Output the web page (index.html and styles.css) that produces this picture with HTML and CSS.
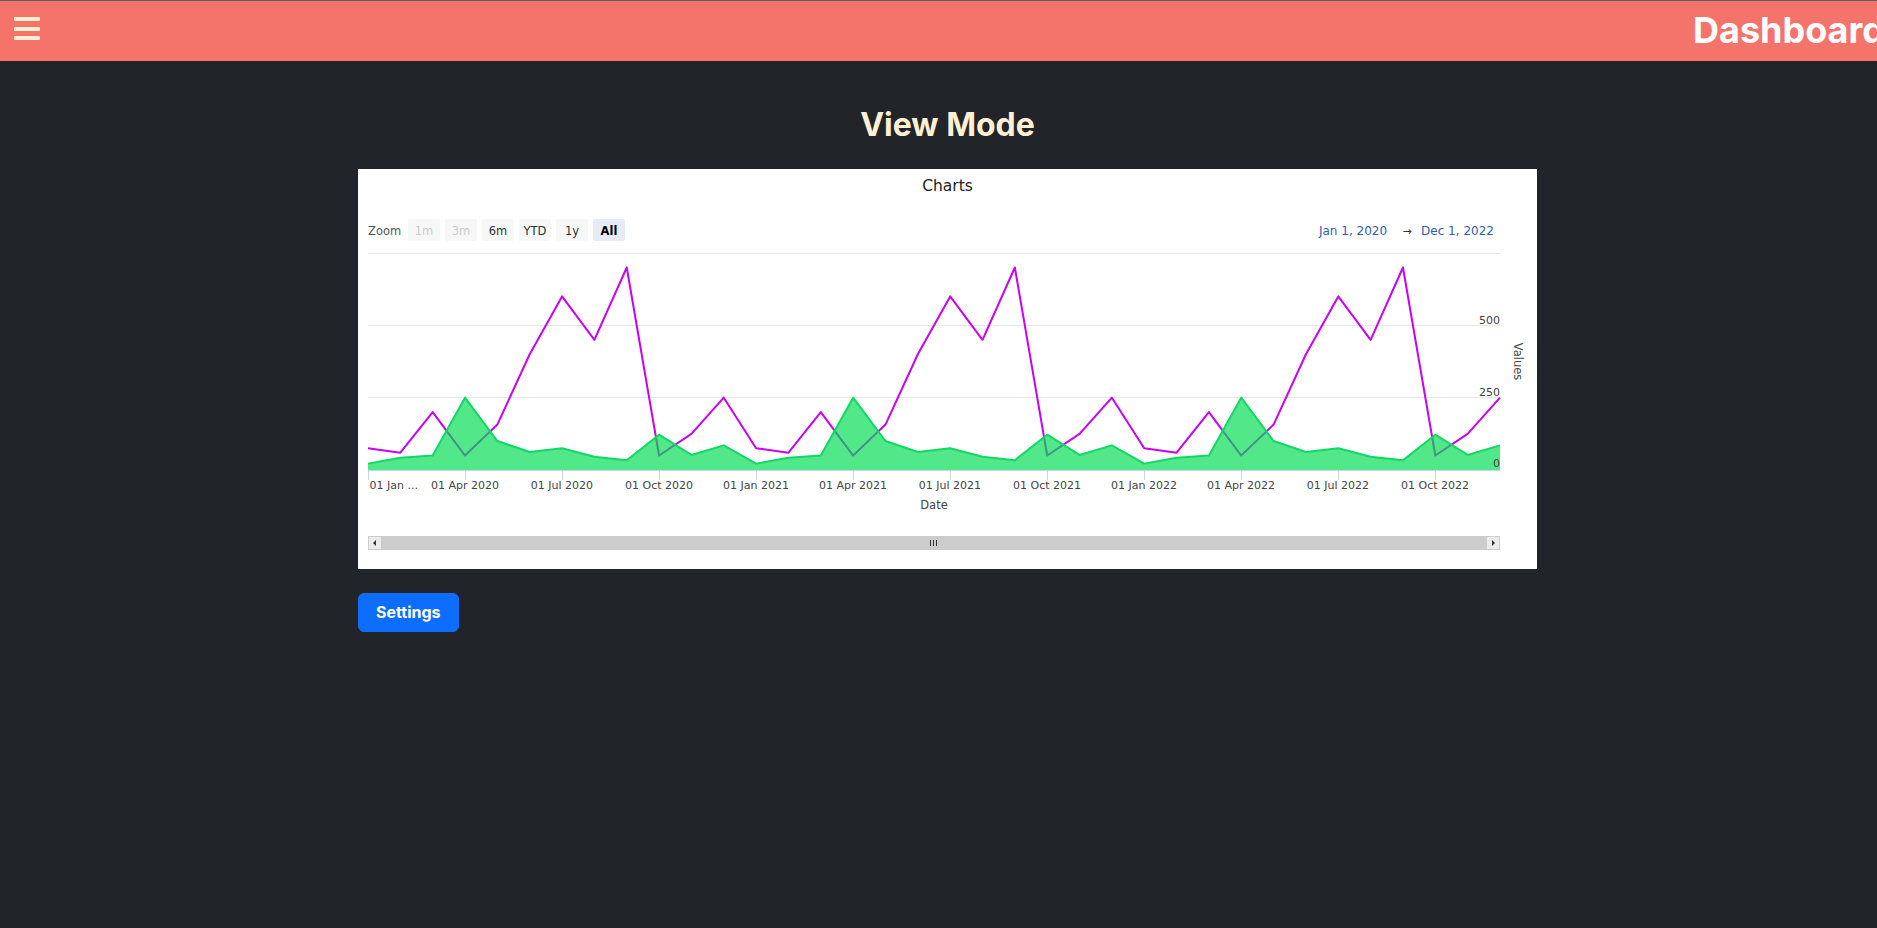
FILE: index.html
```html
<!DOCTYPE html>
<html lang="en">
<head>
<meta charset="utf-8">
<title>Dashboard</title>
<link rel="stylesheet" href="styles.css">
</head>
<body>
<div class="page">
  <header class="topbar">
    <button class="menu-btn" aria-label="Menu">
      <svg width="26" height="24" viewBox="0 0 26 24">
        <rect x="0" y="0" width="26" height="4" rx="1"/>
        <rect x="0" y="10" width="26" height="4" rx="1"/>
        <rect x="0" y="19" width="26" height="4" rx="1"/>
      </svg>
    </button>
    <h1 class="brand">Dashboard</h1>
  </header>

  <main class="content">
    <h2 class="page-title">View Mode</h2>

    <div class="chart-card">
      <svg class="chart" width="1179" height="400" viewBox="0 0 1179 400">
        <text class="c-title" x="589.5" y="21.5">Charts</text>

        <!-- range selector -->
        <text class="rs-label" x="10" y="66">Zoom</text>
        <g class="rs-btn disabled"><rect x="50" y="50" width="32" height="22" rx="2"/><text x="66" y="65.5">1m</text></g>
        <g class="rs-btn disabled"><rect x="87" y="50" width="32" height="22" rx="2"/><text x="103" y="65.5">3m</text></g>
        <g class="rs-btn"><rect x="124" y="50" width="32" height="22" rx="2"/><text x="140" y="65.5">6m</text></g>
        <g class="rs-btn"><rect x="161" y="50" width="32" height="22" rx="2"/><text x="177" y="65.5">YTD</text></g>
        <g class="rs-btn"><rect x="198" y="50" width="32" height="22" rx="2"/><text x="214" y="65.5">1y</text></g>
        <g class="rs-btn selected"><rect x="235" y="50" width="32" height="22" rx="2"/><text x="251" y="65.5">All</text></g>

        <text class="rs-date" x="995" y="65.5">Jan 1, 2020</text>
        <text class="rs-arrow" x="1049" y="65.5">→</text>
        <text class="rs-date" x="1099.5" y="65.5">Dec 1, 2022</text>

        <!-- grid -->
        <g class="grid">
          <line x1="10" y1="84.5" x2="1142" y2="84.5"/>
          <line x1="10" y1="156.5" x2="1142" y2="156.5"/>
          <line x1="10" y1="228.5" x2="1142" y2="228.5"/>
        </g>

        <!-- series -->
        <g transform="translate(10,301) scale(32.342857,-0.289333)">
          <polyline class="s-purple" points="0,75 1,60 2,200 3,50 4,157 5,400 6,600 7,450 8,700 9,50 10,125 11,250 12,75 13,60 14,200 15,50 16,157 17,400 18,600 19,450 20,700 21,50 22,125 23,250 24,75 25,60 26,200 27,50 28,157 29,400 30,600 31,450 32,700 33,50 34,125 35,250"/>
          <polygon class="s-green-area" points="0,0 0,22 1,42 2,50 3,250 4,100 5,62 6,75 7,46 8,34 9,122 10,52 11,85 12,22 13,42 14,50 15,250 16,100 17,62 18,75 19,46 20,34 21,122 22,52 23,85 24,22 25,42 26,50 27,250 28,100 29,62 30,75 31,46 32,34 33,122 34,52 35,85 35,0"/>
          <polyline class="s-green-line" points="0,22 1,42 2,50 3,250 4,100 5,62 6,75 7,46 8,34 9,122 10,52 11,85 12,22 13,42 14,50 15,250 16,100 17,62 18,75 19,46 20,34 21,122 22,52 23,85 24,22 25,42 26,50 27,250 28,100 29,62 30,75 31,46 32,34 33,122 34,52 35,85"/>
        </g>

        <!-- x axis -->
        <line class="axis-line" x1="10" y1="301.5" x2="1142" y2="301.5"/>
        <g class="ticks">
          <line x1="10.5" y1="301" x2="10.5" y2="311"/>
          <line x1="107.5" y1="301" x2="107.5" y2="311"/>
          <line x1="204.5" y1="301" x2="204.5" y2="311"/>
          <line x1="301.5" y1="301" x2="301.5" y2="311"/>
          <line x1="398.5" y1="301" x2="398.5" y2="311"/>
          <line x1="495.5" y1="301" x2="495.5" y2="311"/>
          <line x1="592.5" y1="301" x2="592.5" y2="311"/>
          <line x1="689.5" y1="301" x2="689.5" y2="311"/>
          <line x1="786.5" y1="301" x2="786.5" y2="311"/>
          <line x1="883.5" y1="301" x2="883.5" y2="311"/>
          <line x1="980.5" y1="301" x2="980.5" y2="311"/>
          <line x1="1077.5" y1="301" x2="1077.5" y2="311"/>
        </g>
        <g class="x-labels">
          <text class="first" x="11.5" y="320">01 Jan ...</text>
          <text x="107" y="320">01 Apr 2020</text>
          <text x="204" y="320">01 Jul 2020</text>
          <text x="301" y="320">01 Oct 2020</text>
          <text x="398" y="320">01 Jan 2021</text>
          <text x="495" y="320">01 Apr 2021</text>
          <text x="592" y="320">01 Jul 2021</text>
          <text x="689" y="320">01 Oct 2021</text>
          <text x="786" y="320">01 Jan 2022</text>
          <text x="883" y="320">01 Apr 2022</text>
          <text x="980" y="320">01 Jul 2022</text>
          <text x="1077" y="320">01 Oct 2022</text>
        </g>
        <text class="axis-title" x="576" y="340">Date</text>

        <!-- y axis -->
        <g class="y-labels">
          <text x="1142" y="155">500</text>
          <text x="1142" y="227">250</text>
          <text x="1142" y="298">0</text>
        </g>
        <text class="axis-title" transform="translate(1156,192.5) rotate(90)">Values</text>

        <!-- scrollbar -->
        <g class="scrollbar">
          <rect class="sb-track" x="10.5" y="367.5" width="1131" height="13"/>
          <rect class="sb-thumb" x="24" y="368" width="1104" height="12"/>
          <rect class="sb-btn" x="10.5" y="367.5" width="13" height="13"/>
          <rect class="sb-btn" x="1128.5" y="367.5" width="13" height="13"/>
          <path class="sb-arrow" d="M15 374 L18 371 L18 377 Z"/>
          <path class="sb-arrow" d="M1137 374 L1134 371 L1134 377 Z"/>
          <line class="sb-grip" x1="572.5" y1="371" x2="572.5" y2="377"/>
          <line class="sb-grip" x1="575.5" y1="371" x2="575.5" y2="377"/>
          <line class="sb-grip" x1="578.5" y1="371" x2="578.5" y2="377"/>
        </g>
      </svg>
    </div>

    <button class="btn-settings">Settings</button>
  </main>
</div>
</body>
</html>
```

FILE: styles.css
```css
html,
body {
  margin: 0;
  padding: 0;
  background: #212529;
  overflow: hidden;
}

.page {
  width: 1895px;
  min-height: 928px;
  background: #212529;
}

/* ---------- top bar ---------- */
.topbar {
  box-sizing: border-box;
  height: 61px;
  border-top: 1px solid #5c5f63;
  background: #f4736b;
  display: flex;
  justify-content: space-between;
  align-items: flex-start;
  padding: 0 10px 0 14px;
}

.menu-btn {
  margin-top: 16px;
  width: 26px;
  height: 24px;
  padding: 0;
  border: 0;
  background: none;
  display: block;
}

.menu-btn svg {
  display: block;
  fill: #ffefd5;
}

.brand {
  margin: 11px 0 0 0;
  font-family: Inter, "Liberation Sans", sans-serif;
  font-weight: 700;
  font-size: 36px;
  line-height: 36px;
  color: #ffffff;
  white-space: nowrap;
}

/* ---------- content ---------- */
.content {
  display: flex;
  flex-direction: column;
  align-items: center;
}

.page-title {
  margin: 45px 0 25px;
  font-family: Inter, "Liberation Sans", sans-serif;
  font-weight: 700;
  font-size: 32px;
  line-height: 38px;
  color: #ffefd5;
  text-align: center;
}

.chart-card {
  width: 1179px;
  height: 400px;
  background: #ffffff;
}

.chart {
  display: block;
}

.chart text {
  font-family: "DejaVu Sans", "Noto Sans", sans-serif;
}

.c-title {
  font-size: 15.5px;
  fill: #222222;
  text-anchor: middle;
}

.rs-label {
  font-size: 11.5px;
  fill: #555555;
}

.rs-btn rect {
  fill: #f7f7f7;
}

.rs-btn text {
  font-size: 11.5px;
  fill: #333333;
  text-anchor: middle;
}

.rs-btn.disabled text {
  fill: #cccccc;
}

.rs-btn.selected rect {
  fill: #e6ebf5;
}

.rs-btn.selected text {
  fill: #000000;
  font-weight: bold;
}

.rs-date {
  font-size: 12px;
  fill: #335cad;
  text-anchor: middle;
}

.rs-arrow {
  font-size: 11px;
  fill: #333333;
  text-anchor: middle;
}

.grid line {
  stroke: #e6e6e6;
  stroke-width: 1;
}

.axis-line,
.ticks line {
  stroke: #ccd6eb;
  stroke-width: 1;
}

.s-purple {
  fill: none;
  stroke: #c800f5;
  stroke-width: 2;
  stroke-linejoin: round;
  vector-effect: non-scaling-stroke;
}

.s-green-area {
  fill: rgb(0, 220, 80);
  fill-opacity: 0.68;
  stroke: none;
}

.s-green-line {
  fill: none;
  stroke: #10d865;
  stroke-width: 2;
  stroke-linejoin: round;
  vector-effect: non-scaling-stroke;
}

.x-labels text {
  font-size: 11px;
  fill: #444444;
  text-anchor: middle;
}

.x-labels text.first {
  text-anchor: start;
}

.y-labels text {
  font-size: 11px;
  fill: #444444;
  text-anchor: end;
}

.axis-title {
  font-size: 11.5px;
  fill: #444444;
  text-anchor: middle;
}

.sb-track {
  fill: #f2f2f2;
  stroke: #cccccc;
  stroke-width: 1;
}

.sb-thumb {
  fill: #cccccc;
}

.sb-btn {
  fill: #ebebeb;
  stroke: #cccccc;
  stroke-width: 1;
}

.sb-arrow {
  fill: #333333;
}

.sb-grip {
  stroke: #333333;
  stroke-width: 1;
}

/* ---------- button ---------- */
.btn-settings {
  align-self: flex-start;
  margin: 24px 0 0 358px;
  padding: 7px 17px;
  border: 1px solid #0d6efd;
  border-radius: 6px;
  background: #0d6efd;
  color: #ffffff;
  font-family: Inter, "Liberation Sans", sans-serif;
  font-weight: 700;
  font-size: 16px;
  line-height: 23px;
}
```
